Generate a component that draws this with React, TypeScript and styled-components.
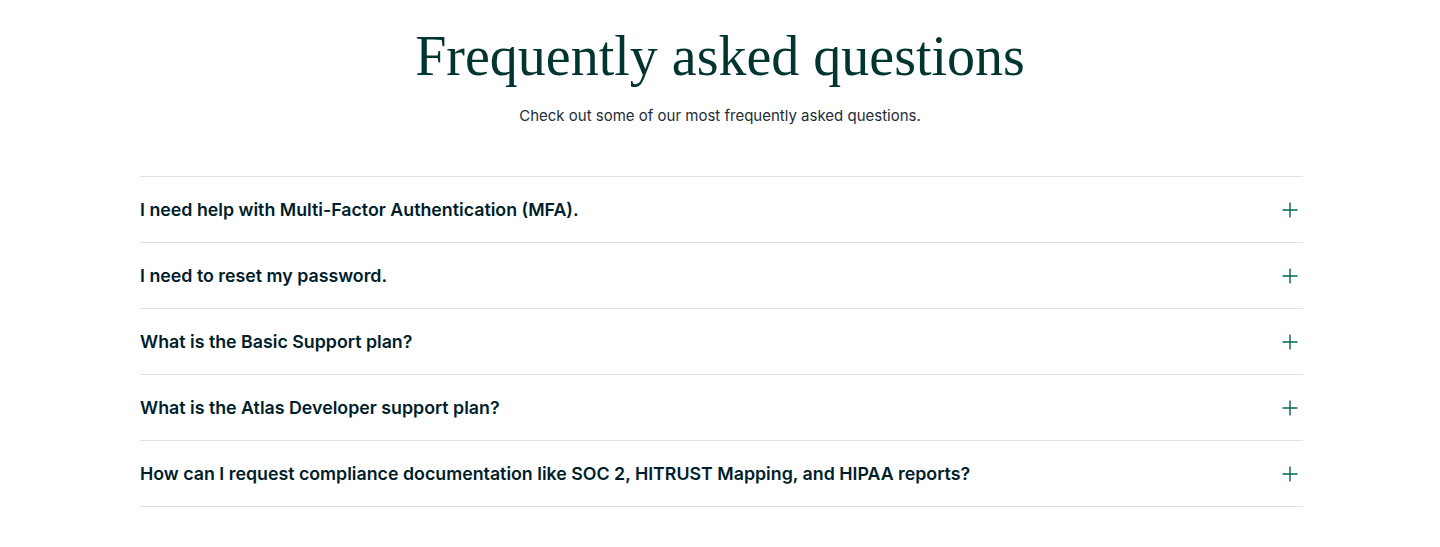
import React from 'react';
import styled, { createGlobalStyle } from 'styled-components';

const questions = [
  'I need help with Multi-Factor Authentication (MFA).',
  'I need to reset my password.',
  'What is the Basic Support plan?',
  'What is the Atlas Developer support plan?',
  'How can I request compliance documentation like SOC 2, HITRUST Mapping, and HIPAA reports?',
];

const GlobalStyle = createGlobalStyle`
  body {
    margin: 0;
    background: #fff;
    font-family: Inter, "Liberation Sans", sans-serif;
  }
`;

const PlusIcon = () => (
  <svg width="16" height="16" viewBox="0 0 16 16" fill="none">
    <path d="M8 0.5V15.5M0.5 8H15.5" stroke="#00684A" strokeWidth="1.4" />
  </svg>
);

export default function App() {
  return (
    <>
      <GlobalStyle />
      <Section>
        <Title>Frequently asked questions</Title>
        <Subtitle>Check out some of our most frequently asked questions.</Subtitle>

        <List>
          {questions.map((q) => (
            <Item key={q}>
              <Question>{q}</Question>
              <Toggle aria-label="Expand">
                <PlusIcon />
              </Toggle>
            </Item>
          ))}
        </List>
      </Section>
    </>
  );
}

const Section = styled.section`
  display: flex;
  flex-direction: column;
  align-items: center;
  padding: 24px 0 40px;
`;

const Title = styled.h2`
  margin: 0;
  font-family: "Liberation Serif", serif;
  font-weight: 400;
  font-size: 56px;
  line-height: 64px;
  color: #023430;
`;

const Subtitle = styled.p`
  margin: 16px 0 0;
  font-size: 15px;
  line-height: 24px;
  color: #1c2d38;
`;

const List = styled.div`
  width: 1163px;
  margin: 48px 0 0 3px;
  border-top: 1px solid #dde2e2;
`;

const Item = styled.div`
  display: flex;
  align-items: center;
  justify-content: space-between;
  height: 65px;
  border-bottom: 1px solid #dde2e2;
`;

const Question = styled.span`
  font-size: 17.8px;
  font-weight: 600;
  color: #001e2b;
`;

const Toggle = styled.button`
  display: flex;
  align-items: center;
  justify-content: center;
  width: 24px;
  height: 24px;
  margin-right: 1px;
  padding: 0;
  border: none;
  background: none;
  cursor: pointer;
`;
